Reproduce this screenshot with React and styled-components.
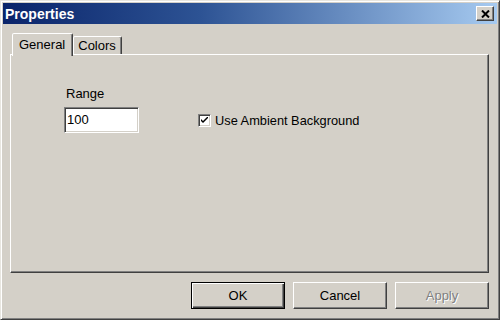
import React from 'react'
import styled, { createGlobalStyle } from 'styled-components'

const GlobalStyle = createGlobalStyle`
  html, body {
    margin: 0;
    padding: 0;
    background: #d4d0c8;
  }
  * {
    box-sizing: border-box;
  }
`

const Window = styled.div`
  width: 500px;
  height: 320px;
  display: flex;
  flex-direction: column;
  background: #d4d0c8;
  border: 1px solid;
  border-color: #e8e6e0 #404040 #404040 #e8e6e0;
  box-shadow: inset 1px 1px #ffffff, inset -1px -1px #808080;
  padding: 2px;
  font-family: 'Liberation Sans', Arial, sans-serif;
  font-size: 13px;
  color: #000;
`

const TitleBar = styled.div`
  height: 21px;
  flex: none;
  display: flex;
  align-items: center;
  justify-content: space-between;
  padding: 0 3px 0 2px;
  background: linear-gradient(to right, #0a246a 0%, #2d5394 40%, #a6caf0 100%);
`

const Title = styled.span`
  color: #ffffff;
  font-weight: bold;
  font-size: 14px;
`

const CloseButton = styled.div`
  width: 18px;
  height: 15px;
  display: flex;
  align-items: center;
  justify-content: center;
  background: #d4d0c8;
  border: 1px solid;
  border-color: #ffffff #404040 #404040 #ffffff;
  box-shadow: inset -1px -1px #808080;
`

const Content = styled.div`
  flex: 1;
  display: flex;
  flex-direction: column;
  padding: 9px 8px 0 7px;
`

const TabStrip = styled.div`
  height: 21px;
  display: flex;
  align-items: flex-end;
  padding-left: 2px;
  position: relative;
  z-index: 1;
`

const Tab = styled.div`
  height: ${p => (p.$active ? '23px' : '18px')};
  margin-bottom: ${p => (p.$active ? '-2px' : '0')};
  padding: ${p => (p.$active ? '3px 7px 0 6px' : '1px 5px 0 4px')};
  background: #d4d0c8;
  border-style: solid;
  border-width: 1px 1px 0 1px;
  border-color: #ffffff #404040 transparent #ffffff;
  border-radius: 2px 2px 0 0;
  box-shadow: inset -1px 0 #808080;
  line-height: 16px;
`

const Panel = styled.div`
  height: 219px;
  border: 1px solid;
  border-color: #ffffff #404040 #404040 #ffffff;
  box-shadow: inset -1px -1px #808080;
  display: flex;
  padding: 0 0 0 53px;
`

const FieldRow = styled.div`
  display: flex;
  align-items: flex-end;
  gap: 59px;
  margin-top: 31px;
  align-self: flex-start;
`

const Field = styled.div`
  display: flex;
  flex-direction: column;
`

const Label = styled.label`
  line-height: 16px;
  padding-left: 2px;
  margin-bottom: 5px;
`

const TextBox = styled.div`
  width: 75px;
  height: 26px;
  background: #ffffff;
  border: 1px solid;
  border-color: #808080 #ffffff #ffffff #808080;
  box-shadow: inset 1px 1px #404040, inset -1px -1px #d4d0c8;
  padding: 3px 0 0 2px;
  line-height: 18px;
`

const CheckRow = styled.div`
  height: 26px;
  display: flex;
  align-items: center;
  gap: 4px;
  font-size: 12.8px;
`

const CheckBox = styled.div`
  width: 13px;
  height: 13px;
  background: #ffffff;
  border: 1px solid;
  border-color: #808080 #ffffff #ffffff #808080;
  box-shadow: inset 1px 1px #404040, inset -1px -1px #d4d0c8;
  display: flex;
  align-items: center;
  justify-content: center;
`

const ButtonRow = styled.div`
  display: flex;
  justify-content: flex-end;
  gap: 8px;
  margin-top: 9px;
`

const Button = styled.div`
  width: 94px;
  height: 27px;
  display: flex;
  align-items: center;
  justify-content: center;
  background: #d4d0c8;
  border: 1px solid;
  border-color: ${p => (p.$default ? '#000000' : '#ffffff #404040 #404040 #ffffff')};
  box-shadow: ${p =>
    p.$default
      ? 'inset 1px 1px #ffffff, inset -1px -1px #404040, inset -2px -2px #808080'
      : 'inset -1px -1px #808080'};
  color: ${p => (p.$disabled ? '#808080' : '#000000')};
  text-shadow: ${p => (p.$disabled ? '1px 1px #ffffff' : 'none')};
`

const App = () => (
  <>
    <GlobalStyle />
    <Window>
      <TitleBar>
        <Title>Properties</Title>
        <CloseButton>
          <svg width="9" height="8" viewBox="0 0 9 8">
            <path d="M1 0.5 L8 7.5 M8 0.5 L1 7.5" stroke="#000" strokeWidth="2" />
          </svg>
        </CloseButton>
      </TitleBar>
      <Content>
        <TabStrip>
          <Tab $active>General</Tab>
          <Tab>Colors</Tab>
        </TabStrip>
        <Panel>
          <FieldRow>
            <Field>
              <Label>Range</Label>
              <TextBox>100</TextBox>
            </Field>
            <CheckRow>
              <CheckBox>
                <svg width="7" height="7" viewBox="0 0 7 7">
                  <path d="M0 2 L0 4 L2 6 L7 1 L7 -1 L2 4 Z" fill="#000" />
                </svg>
              </CheckBox>
              <span>Use Ambient Background</span>
            </CheckRow>
          </FieldRow>
        </Panel>
        <ButtonRow>
          <Button $default>OK</Button>
          <Button>Cancel</Button>
          <Button $disabled>Apply</Button>
        </ButtonRow>
      </Content>
    </Window>
  </>
)

export default App
